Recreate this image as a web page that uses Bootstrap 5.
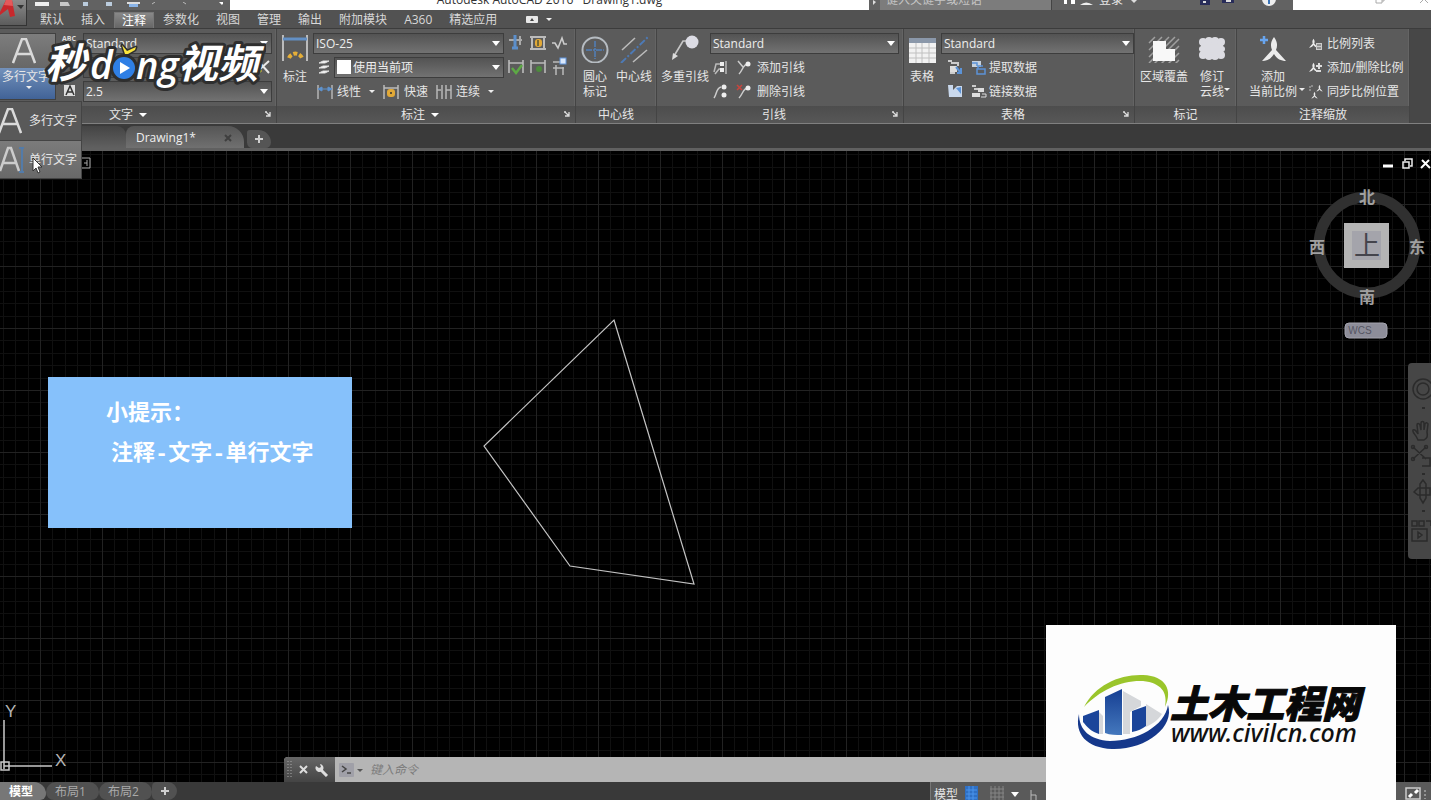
<!DOCTYPE html>
<html lang="zh-CN">
<head>
<meta charset="utf-8">
<meta name="viewport" content="width=device-width, initial-scale=1">
<title>Autodesk AutoCAD 2016 - Drawing1.dwg</title>
<link href="https://cdn.jsdelivr.net/npm/bootstrap@5.3.0/dist/css/bootstrap.min.css" rel="stylesheet">
<style>
  body { font-family: "Open Sans", "Noto Sans CJK SC", sans-serif; font-size: 12px; line-height: 16px; color: #e6e6e6; background: #3a3a3a; }
  button { font: inherit; color: inherit; background: none; border: 0; padding: 0; }
  svg { display: block; flex: none; }
  a { color: inherit; text-decoration: none; }

  .titlebar { height: 10px; background: #626262; }
  .titlebar .clip-end { align-items: flex-end; }
  .quick { width: 230px; padding-left: 35px; gap: 9px; }
  .doc-title { background: #fff; color: #333; font-size: 12px; line-height: 20px; }
  .search-box { width: 172px; background: #7c7c7c; border: 0; border-right: 1px solid #444; color: #c4c4c4; padding: 0 6px; line-height: 20px; height: 20px; }
  .search-box::placeholder { color: #c4c4c4; opacity: 1; }
  .account { width: 241px; gap: 6px; padding-left: 12px; line-height: 20px; }
  .win { width: 138px; background: #fff; gap: 34px; padding-right: 2px; }
  .app-btn { left: 0; top: 0; width: 27px; height: 26px; background: linear-gradient(#8b8b8b, #5c5c5c); border: 1px solid #333; border-width: 0 1px 1px 0; z-index: 3; }

  .menu { height: 18px; background: #525252; padding-left: 32px; gap: 1px; }
  .menu a { padding: 0 8px; height: 18px; color: #d8d8d8; line-height: 20px; }
  .menu a.on { background: linear-gradient(#888, #666); color: #fff; padding: 0 7px; border: 1px solid #777; border-bottom: 0; margin-top: 2px; line-height: 15px; height: 16px; }

  .ribbon { height: 96px; background: #474747; border-top: 1px solid #3c3c3c; border-bottom: 1px solid #808080; }
  .panel { border-right: 1px solid #444; box-shadow: inset -1px 0 #646464; background: #5b5b5b; }
  .panel-body { height: 77px; padding-top: 4px; }
  .panel-name { height: 17px; background: linear-gradient(#4d4d4d, #575757); gap: 6px; }
  .panel-name.more { padding-right: 12px; }
  .panel-name.drop { padding-right: 20px; }
  .launch { right: 5px; top: 5px; }
  .w-text { width: 277px; } .w-dim { width: 299px; } .w-center { width: 81px; } .w-leader { width: 247px; }
  .w-table { width: 231px; } .w-mark { width: 102px; } .w-scale { width: 173px; }
  .tool { line-height: 15px; text-align: center; white-space: nowrap; padding: 0 4px; }
  .tool.snug { padding: 0 1px 0 4px; }
  .tool.edge { padding: 0 2px 0 1px; }
  .tool svg { margin: 0 auto 6px; }
  .rows { gap: 4px; min-width: 0; }
  .line { height: 20px; line-height: 18px; }
  .line button, button.line { padding-top: 2px; }
  .pick { appearance: none; height: 21px; border: 1px solid #3d3d3d; border-radius: 0; color: #eee; padding: 0 2px; line-height: 19px; min-width: 0;
    background: url("data:image/svg+xml,%3Csvg xmlns='http://www.w3.org/2000/svg' width='8' height='5'%3E%3Cpath d='M0 0h8L4 5z' fill='%23fff'/%3E%3C/svg%3E") no-repeat right 3px center, linear-gradient(#535353, #727272); }
  .pick.layer { padding-left: 18px; }
  .pick.find { background: #555; }
  .caret { width: 0; height: 0; border: 4px solid transparent; border-top-color: #fff; border-bottom: 0; }
  .caret-s { width: 0; height: 0; border: 3px solid transparent; border-top-color: #eee; border-bottom: 0; }
  .mtext { width: 56px; height: 67px; border: 1px solid #414141; border-left: 0; }
  .mtext .up { height: 35px; background: linear-gradient(#7d7d7d, #676767); }
  .mtext .down { height: 31px; background: linear-gradient(#7391bb, #416397); line-height: 18px; padding-left: 2px; white-space: nowrap; }
  .swatch { left: 3px; top: 3px; width: 14px; height: 14px; background: #fff; pointer-events: none; }
  .abc-col { width: 23px; }

  .filetabs { height: 27px; background: #3a3a3a; border-bottom: 3px solid #606060; padding-left: 76px; }
  .ftab { height: 22px; background: linear-gradient(#555, #707070); }
  .ftab.past { width: 50px; background: linear-gradient(#444, #606060); border-radius: 0 9px 0 0; }
  .ftab.now { width: 118px; padding: 2px 12px 0 10px; color: #eee; border-radius: 8px 16px 0 0; }
  .ftab.plus { width: 24px; height: 18px; margin-left: 3px; background: #555; border-radius: 3px 14px 6px 6px; }

  .stage { background-color: #000; background-position: 40px 53px;
    background-image:
      linear-gradient(90deg, #222 0 1px, transparent 1px 12px, #101010 12px 13px, transparent 13px 25px, #101010 25px 26px, transparent 26px 37px, #101010 37px 38px, transparent 38px 50px, #101010 50px 51px, transparent 51px),
      linear-gradient(#222 0 1px, transparent 1px 12px, #101010 12px 13px, transparent 13px 25px, #101010 25px 26px, transparent 26px 37px, #101010 37px 38px, transparent 38px 50px, #101010 50px 51px, transparent 51px);
    background-size: 62px 62px; background-blend-mode: lighten; }
  .art { inset: 0; width: 100%; height: 100%; }
  .ucs { left: 0; bottom: 0; }
  .mdi { right: 0; top: 7px; gap: 7px; }
  .cube { right: 4px; top: 32px; }
  .navbar-side { right: 0; top: 212px; width: 23px; height: 196px; background: #464646; border-radius: 4px 0 0 4px; overflow: hidden; }
  .tip { left: 48px; top: 226px; width: 304px; height: 151px; background: #86c1fb; color: #fff; font: 700 22px/40px "Liberation Mono", "Noto Sans CJK SC", monospace; padding: 18px 0 0 58px; white-space: nowrap; }
  .tip p + p { padding-left: 5px; }
  .cmd { left: 284px; right: 60px; bottom: 0; height: 25px; background: #b5b5b5; border-radius: 4px 4px 0 0; overflow: hidden; }
  .cmd-grip { width: 51px; background: linear-gradient(#666, #444); gap: 7px; padding-left: 3px; }
  .cmd input { background: none; border: 0; outline: 0; font-style: italic; color: #555; padding: 0 5px; }
  .cmd input::placeholder { color: #7c7c7c; opacity: 1; }

  .flyout { left: 0; top: 101px; width: 82px; background: #595959; border: 1px solid #444; border-left: 0; z-index: 4; }
  .flyout button { height: 38px; width: 100%; gap: 5px; padding-right: 5px; white-space: nowrap; }
  .flyout .hot { background: linear-gradient(#7b7b7b, #696969); border-top: 1px solid #444; }
  .wm { left: 36px; top: 36px; z-index: 5; pointer-events: none; }
  .pointer { left: 32px; top: 157px; z-index: 6; }

  .status { height: 18px; background: #393939; overflow: hidden; }
  .ltab { height: 18px; background: #515151; color: #aaa; border-radius: 10px 10px 8px 8px; line-height: 20px; }
  .ltab.on { width: 46px; background: #777; color: #fff; font-weight: 700; border-radius: 0 12px 6px 0; padding-right: 4px; }
  .ltab.page { width: 53px; padding-right: 4px; }
  .ltab.plus { width: 25px; border-radius: 6px 12px 12px 6px; }
  .tray { width: 501px; background: #5a5a5a; gap: 7px; padding: 0 4px 0 3px; border-left: 1px solid #777; line-height: 26px; }
  .site { right: 35px; bottom: 0; width: 350px; height: 175px; background: #fdfdfd; z-index: 7; }
</style>
</head>
<body class="vh-100 overflow-hidden d-flex flex-column position-relative">

<svg width="0" height="0" class="position-absolute" aria-hidden="true">
  <defs>
    <symbol id="bigA" viewBox="0 0 24 26"><path d="M1 25 10 1h4l9 24M5 16h14" fill="none" stroke="#dadada" stroke-width="2.500"/></symbol>
    <symbol id="go" viewBox="0 0 6 6"><path d="M0 1h2M1 1l4 4M5 1v4H1" stroke="#ddd" fill="none" stroke-width="1.3"/></symbol>
    <symbol id="plus" viewBox="0 0 8 8"><path d="M4 0v8M0 4h8" stroke="#d0d0d0" stroke-width="2"/></symbol>
    <symbol id="dimline" viewBox="0 0 16 14"><path d="M1 0v14M15 0v14" stroke="#b5b5b5" stroke-width="1.5"/><path d="M1 4h14M1 4l4-2v4zM15 4l-4-2v4z" stroke="#5f93cf" fill="#5f93cf"/></symbol>
    <symbol id="leader" viewBox="0 0 28 26"><path d="M3 21 12 6h7" stroke="#c5c5c5" stroke-width="1.7" fill="none"/><path d="M1 25l1-7 5 3z" fill="#ddd"/><circle cx="21" cy="7" r="6.5" fill="#dcdce4"/></symbol>
    <symbol id="scaleman" viewBox="0 0 24 26"><path d="M12 0c3 4 4 8 2 13l10 11c-5 0-9-2-12-7-3 5-7 7-12 7L10 13C8 8 9 4 12 0z" fill="#ececec"/></symbol>
  </defs>
</svg>

<header class="titlebar d-flex overflow-hidden flex-shrink-0">
  <div class="quick d-flex clip-end flex-shrink-0">
    <svg width="188" height="8" viewBox="0 0 188 8"><path d="M0 0h14v4H0z" fill="#eee"/><path d="M25 0h8l2 4h-10z" fill="#c8c8c8"/><path d="M48 0h5v4h-5zM71 0h6v4h-6z" fill="#bcd"/><path d="M92 0h13v2h-13z" fill="#ddd"/><path d="M94 2h9v3h-9z" fill="#8ab4e8"/><path d="M117 2l3-2M148 0l3 2" stroke="#bbb"/><path d="M184 0h5l-2 3z" fill="#fff"/></svg>
  </div>
  <div class="doc-title flex-grow-1 d-flex clip-end justify-content-center overflow-hidden"><span>Autodesk AutoCAD 2016 &nbsp; Drawing1.dwg</span></div>
  <div class="px-1 d-flex"><svg width="3" height="5"><path d="M0 0l3 2-3 3z" fill="#ddd"/></svg></div>
  <div class="d-flex clip-end"><input class="search-box" aria-label="搜索" placeholder="键入关键字或短语"></div>
  <div class="account d-flex clip-end flex-shrink-0">
    <svg width="29" height="10"><path d="M1 0v4M9 0v4" stroke="#fff" stroke-width="4"/><path d="M16 5q6-5 13 0z" fill="#eee"/></svg>
    <a href="#" class="text-nowrap">登录</a>
    <svg width="164" height="10"><path d="M2 0h6l-3 3z" fill="#ddd"/><path d="M71 0h10v5h-10zM93 0h12v3H93z" fill="#282c59"/><path d="M74 2h3M97 1h5" stroke="#ddd" stroke-width="2"/><circle cx="140" cy="-1" r="7" fill="#eee"/><path d="M140 0v4" stroke="#3973b8" stroke-width="2"/></svg>
  </div>
  <div class="win d-flex justify-content-end flex-shrink-0">
    <svg width="10" height="5"><path d="M1 0v3h6V0M7 1h2V0" stroke="#aaa" fill="none"/></svg>
    <svg width="10" height="5"><path d="M1 3l3-3M9 3 6 0" stroke="#aaa" fill="none"/></svg>
  </div>
</header>
<button class="app-btn position-absolute overflow-hidden" aria-label="应用程序菜单"><svg width="26" height="25"><path d="M0 12 6 0h6l3 16-5 1-2-8-8 6z" fill="#c8282c"/><path d="M6 0h6l1 6-9-1z" fill="#e4595b"/><path d="M17 5h7l-3 4z" fill="#333"/></svg></button>

<nav class="menu d-flex flex-shrink-0" aria-label="功能区">
  <a href="#">默认</a><a href="#">插入</a><a href="#" class="on">注释</a><a href="#">参数化</a><a href="#">视图</a><a href="#">管理</a><a href="#">输出</a><a href="#">附加模块</a><a href="#">A360</a><a href="#">精选应用</a>
  <button class="d-flex align-items-center gap-2 ms-3 ps-1" aria-label="最小化"><svg width="12" height="7"><rect width="12" height="7" rx="1" fill="#e8e8e8"/><path d="M4 5l2-3 2 3z" fill="#444"/></svg><span class="caret-s"></span></button>
</nav>

<section class="ribbon d-flex flex-shrink-0">
  <div class="panel w-text flex-shrink-0">
    <div class="panel-body d-flex">
      <button class="mtext d-flex flex-column align-items-stretch text-start flex-shrink-0">
        <span class="up d-flex align-items-center justify-content-center ps-0 pe-2"><svg width="24" height="26"><use href="#bigA"/></svg></span>
        <span class="down overflow-hidden d-block">多行文字<span class="caret-s d-block mx-auto"></span></span>
      </button>
      <div class="rows d-flex flex-column flex-grow-1 ps-1 pe-1">
        <div class="line d-flex"><svg class="abc-col" height="20"><text x="2" y="8" font-size="7" font-weight="700" fill="#ddd">ABC</text></svg><select class="pick flex-grow-1" aria-label="文字样式"><option>Standard</option></select></div>
        <div class="line d-flex"><span class="abc-col"></span><input class="pick find flex-grow-1" aria-label="查找文字"><svg width="15" height="20" class="ms-n3"><path d="M2 13l10-9M3 6l9 10" stroke="#e8e8e8" stroke-width="2"/><path d="M1 12l3 3" stroke="#e8b33c" stroke-width="3"/></svg></div>
        <div class="line d-flex"><svg class="abc-col" height="20"><rect x="4" y="4" width="11" height="11" fill="#ddd"/><path d="M6 14l4-9 4 9M8 11h5" stroke="#333" fill="none" stroke-width="1.5"/></svg><select class="pick flex-grow-1" aria-label="文字高度"><option>2.5</option></select></div>
      </div>
    </div>
    <div class="panel-name drop d-flex align-items-center justify-content-center position-relative">文字<span class="caret"></span><svg class="launch position-absolute" width="6" height="6"><use href="#go"/></svg></div>
  </div>

  <div class="panel w-dim flex-shrink-0">
    <div class="panel-body d-flex">
      <button class="tool align-self-start"><svg width="28" height="28" class="mb-2"><path d="M2 2v26M26 2v26" stroke="#bbb" stroke-width="2"/><path d="M2 6h24" stroke="#6390c5" stroke-width="3"/><path d="M8 25a7 7 0 0 1 13 0" stroke="#e6af38" stroke-width="4" stroke-dasharray="4 2" fill="none"/></svg>标注</button>
      <div class="rows d-flex flex-column flex-grow-1 pe-2">
        <div class="line d-flex gap-1"><select class="pick flex-grow-1" aria-label="标注样式"><option>ISO-25</option></select>
          <svg width="59" height="20"><path d="M1 7h13M12 3v9" stroke="#aaa" stroke-width="2"/><path d="M7 2v14M4 15h6" stroke="#5c8fcb" stroke-width="3"/><path d="M24 4v13M36 4v13M22 4h16M22 16h16" stroke="#bbb" stroke-width="2"/><rect x="27" y="6" width="7" height="8" rx="3" fill="#e2a937"/><path d="M30 7v6" stroke="#553" stroke-width="1.5"/><path d="M44 10h3l3 5 4-10 2 6h3" stroke="#ccc" stroke-width="1.6" fill="none"/></svg></div>
        <div class="line d-flex gap-1 ps-1"><svg width="13" height="20"><path d="M2 6l4-2h6L8 6zM2 11l4-2h6l-4 2zM2 16l4-2h6l-4 2z" fill="#fff" stroke="#ddd"/></svg>
          <span class="position-relative d-flex flex-grow-1"><select class="pick layer flex-grow-1" aria-label="标注图层"><option>使用当前项</option></select><span class="swatch position-absolute"></span></span>
          <svg width="59" height="20"><path d="M1 3v13M15 3v13M1 6h14M23 3v13M37 3v13M23 6h14" stroke="#bbb" stroke-width="1.6" fill="none"/><path d="M4 11l4 5 6-8" stroke="#5da945" stroke-width="2.5" fill="none"/><circle cx="31" cy="12" r="3" fill="#4c8a3c"/><path d="M45 5h8M45 11h11M48 8v10M55 10v8" stroke="#bbb" stroke-width="1.5"/><rect x="52" y="1" width="6" height="6" fill="#d9e7fa" stroke="#6095dd"/></svg></div>
        <div class="line d-flex align-items-center ps-1"><button class="d-flex align-items-center"><svg width="16" height="14" class="me-1"><use href="#dimline"/></svg>线性</button><span class="caret-s ms-2"></span>
          <button class="d-flex align-items-center ms-2"><svg width="17" height="14" class="me-1"><path d="M1 0v14M15 0v14M1 3h14" stroke="#bbb" stroke-width="1.5"/><rect x="4" y="4" width="8" height="8" rx="3" fill="#e2a937"/><circle cx="8" cy="8" r="1" fill="#333"/></svg>快速</button>
          <button class="d-flex align-items-center ms-2"><svg width="16" height="14" class="me-1"><path d="M1 0v14M6 0v14M10 0v14M15 0v14M1 5h4M10 5h5" stroke="#b8b8b8" stroke-width="1.5"/></svg>连续</button><span class="caret-s ms-2"></span></div>
      </div>
    </div>
    <div class="panel-name more d-flex align-items-center justify-content-center position-relative">标注<span class="caret"></span><svg class="launch position-absolute" width="6" height="6"><use href="#go"/></svg></div>
  </div>

  <div class="panel w-center flex-shrink-0">
    <div class="panel-body d-flex align-items-start ps-1 gap-1">
      <button class="tool edge"><svg width="28" height="30"><circle cx="14" cy="17" r="12.500" fill="none" stroke="#b6bcc2" stroke-width="2"/><path d="M14 8v18M5 17h18" stroke="#5180bb" stroke-width="1.500" stroke-dasharray="6 1 2 1"/></svg>圆心<br>标记</button>
      <button class="tool edge"><svg width="28" height="30"><path d="M2 17 15 5M13 29l14-12" stroke="#bbb" stroke-width="1.600"/><path d="M1 30 28 4" stroke="#4d7ab6" stroke-width="2" stroke-dasharray="7 2 2 2"/></svg>中心线</button>
    </div>
    <div class="panel-name d-flex align-items-center justify-content-center">中心线</div>
  </div>

  <div class="panel w-leader flex-shrink-0">
    <div class="panel-body d-flex">
      <button class="tool snug align-self-start"><svg width="28" height="30"><use href="#leader" y="2" height="26"/></svg>多重引线</button>
      <div class="rows d-flex flex-column flex-grow-1 pe-1">
        <div class="line d-flex"><select class="pick flex-grow-1" aria-label="多重引线样式"><option>Standard</option></select></div>
        <div class="line d-flex align-items-center"><svg width="47" height="16"><path d="M4 13l2-8h4M5 15l4-5h4M16 2v13" stroke="#bbb" stroke-width="1.500" fill="none"/><path d="M10 3h4v4h-4zM10 9h4v4h-4z" fill="#eee"/><path d="M29 15c4-4 4-10 9-10M28 2l5 6" stroke="#ccc" stroke-width="1.500" fill="none"/><circle cx="38" cy="5" r="2.500" fill="#eee"/></svg><button>添加引线</button></div>
        <div class="line d-flex align-items-center"><svg width="47" height="16"><path d="M4 15c3-4 2-10 7-11" stroke="#ccc" stroke-width="1.500" fill="none"/><circle cx="14" cy="4" r="2.500" fill="#eee"/><circle cx="14" cy="12" r="2.500" fill="#eee"/><path d="M29 15c4-4 4-10 9-10" stroke="#ccc" stroke-width="1.500" fill="none"/><path d="M27 2l5 5M32 2l-5 5" stroke="#c8453d" stroke-width="1.500"/><circle cx="38" cy="5" r="2.500" fill="#eee"/></svg><button>删除引线</button></div>
      </div>
    </div>
    <div class="panel-name more d-flex align-items-center justify-content-center position-relative">引线<svg class="launch position-absolute" width="6" height="6"><use href="#go"/></svg></div>
  </div>

  <div class="panel w-table flex-shrink-0">
    <div class="panel-body d-flex">
      <button class="tool snug align-self-start me-1"><svg width="28" height="30"><path d="M1 5h27v25H1z" fill="#f2f2f2"/><path d="M1 5h27v5H1z" fill="#8b98aa"/><path d="M1 15h27M1 20h27M1 25h27M8 10v20M14 10v20M21 10v20" stroke="#c0c0c0"/></svg>表格</button>
      <div class="rows d-flex flex-column flex-grow-1">
        <div class="line d-flex"><select class="pick flex-grow-1" aria-label="表格样式"><option>Standard</option></select></div>
        <div class="line d-flex align-items-center ps-1"><svg width="44" height="16"><path d="M3 2h4M6 4h7v3M5 14h5" stroke="#ccc" stroke-width="2" fill="none"/><path d="M5 7h7v6H5z" fill="#ddd"/><path d="M11 8l5 6M16 9v5h-4" stroke="#5c93d7" stroke-width="2" fill="none"/><path d="M27 2h9v6h-9z" fill="#c6d2df"/><path d="M27 4h5v3M32 10h8v5h-8zM33 10V7h5" stroke="#5c93d7" stroke-width="1.500" fill="none"/></svg><button>提取数据</button></div>
        <div class="line d-flex align-items-center ps-1"><svg width="44" height="16"><path d="M3 2h5v5l4-4h5v11H4z" fill="#c9d8ec"/><path d="M11 5l5 6V4z" fill="#5c93d7"/><path d="M27 3h4M29 6h4" stroke="#ccc" stroke-width="2"/><path d="M33 5h6v4h-6zM27 10h8v4h-8z" fill="#ddd"/><path d="M37 11h4v3h-5" stroke="#ddd" fill="none"/></svg><button>链接数据</button></div>
      </div>
    </div>
    <div class="panel-name more d-flex align-items-center justify-content-center position-relative">表格<svg class="launch position-absolute" width="6" height="6"><use href="#go"/></svg></div>
  </div>

  <div class="panel w-mark flex-shrink-0">
    <div class="panel-body d-flex align-items-start ps-1 gap-1">
      <button class="tool edge"><svg width="32" height="30"><path d="M1 10l6-6M1 17 14 4M1 24 21 4M1 30 27 4M5 32 31 6M12 32l19-19M19 32l12-12M26 32l5-5" stroke="#a0a0a0" stroke-width="1.500"/><path d="M5 8h13v8h9v12H5z" fill="#f8f8f8"/></svg>区域覆盖</button>
      <button class="tool position-relative"><svg width="28" height="30" fill="#dcdce2"><rect x="3" y="8" width="22" height="15"/><circle cx="5" cy="9" r="4"/><circle cx="11" cy="8" r="4"/><circle cx="17" cy="8" r="4"/><circle cx="23" cy="9" r="4"/><circle cx="4" cy="16" r="3"/><circle cx="24" cy="16" r="3"/><circle cx="5" cy="22" r="4"/><circle cx="11" cy="23" r="4"/><circle cx="17" cy="23" r="4"/><circle cx="23" cy="22" r="4"/></svg>修订<br>云线<span class="caret-s position-absolute end-0 bottom-0 mb-2"></span></button>
    </div>
    <div class="panel-name d-flex align-items-center justify-content-center">标记</div>
  </div>

  <div class="panel w-scale flex-shrink-0">
    <div class="panel-body d-flex">
      <button class="tool ps-2 pe-2 ms-1 align-self-start position-relative"><svg width="28" height="30"><use href="#scaleman" x="3" y="4" width="24" height="26"/><path d="M5 3v8M1 7h8" stroke="#68a5ee" stroke-width="2.500"/></svg>添加<br>当前比例<span class="caret-s position-absolute end-0 bottom-0 mb-2"></span></button>
      <div class="rows d-flex flex-column ps-1">
        <button class="line d-flex align-items-center gap-1"><svg width="14" height="14"><use href="#scaleman" width="9" height="13"/><rect x="7" y="6" width="6" height="7" fill="#ccc"/><path d="M8 8h4M8 11h4" stroke="#555"/></svg>比例列表</button>
        <button class="line d-flex align-items-center gap-1 text-nowrap"><svg width="14" height="14"><use href="#scaleman" width="9" height="13"/><path d="M7 5h6M7 10h5M10 2v6" stroke="#ddd" stroke-width="2"/></svg>添加/删除比例</button>
        <button class="line d-flex align-items-center gap-1 text-nowrap"><svg width="14" height="14"><path d="M1 6V1h4" stroke="#bbb" stroke-dasharray="2 1" fill="none"/><use href="#scaleman" x="7" width="7" height="7"/><use href="#scaleman" x="2" y="7" width="7" height="7"/></svg>同步比例位置</button>
      </div>
    </div>
    <div class="panel-name d-flex align-items-center justify-content-center">注释缩放</div>
  </div>
</section>

<div class="flyout position-absolute">
  <button class="d-flex align-items-center"><svg width="24" height="28" viewBox="2 0 24 26"><use href="#bigA" width="24" height="26"/></svg>多行文字</button>
  <button class="hot d-flex align-items-center"><svg width="24" height="28"><path d="M0 25 8 2h3l8 23M3 17h13" fill="none" stroke="#ccc" stroke-width="2.500"/><path d="M22 2v24M19 2h5M19 26h5" stroke="#537ba8" stroke-width="2"/></svg>单行文字</button>
</div>
<svg class="pointer position-absolute" width="12" height="18"><path d="M1 1v13l3-3 2 5 2-1-2-5h4z" fill="#fff" stroke="#333"/></svg>

<svg class="wm position-absolute" width="230" height="60" font-family="Open Sans, Noto Sans CJK SC, sans-serif" font-style="italic" font-weight="700" fill="#fff" stroke="#2e2e2e" stroke-width="6" stroke-linejoin="round" paint-order="stroke">
  <text x="9" y="42" font-size="41">秒</text>
  <text x="54" y="43" font-size="39" font-weight="600">d</text>
  <text x="100" y="43" font-size="38" font-weight="600">ng</text>
  <text x="142" y="42" font-size="40">视频</text>
  <circle cx="88" cy="32" r="11" fill="#2f7fe5"/>
  <path d="M84 26v12l10-6z" stroke="none"/>
  <path d="M86 9l5 6 9-4-1 3-7 4h-3z" fill="#fbe63c" stroke-width="3"/>
</svg>

<div class="filetabs d-flex align-items-end flex-shrink-0">
  <div class="ftab past"></div>
  <div class="ftab now d-flex align-items-center justify-content-between"><a href="#">Drawing1*</a><button aria-label="关闭"><svg width="8" height="8"><path d="M1 1l6 6M7 1 1 7" stroke="#3f3f3f" stroke-width="2"/></svg></button></div>
  <button class="ftab plus d-flex align-items-center justify-content-center" aria-label="新图形"><svg width="8" height="8"><use href="#plus"/></svg></button>
</div>

<main class="stage flex-grow-1 position-relative overflow-hidden">
  <svg class="art position-absolute"><path d="M614 169 694 433 570 415 484 295z" fill="none" stroke="#c4c4c4" stroke-width="1.200"/><path d="M82 7h8v10h-8M87 9v6M84 12h3" fill="none" stroke="#aaa"/></svg>
  <svg class="ucs position-absolute" width="80" height="80"><path d="M4 18v49M4 64h48" stroke="#c8c8c8" stroke-width="1.500"/><path d="M1 60h8v8H1z" fill="none" stroke="#c8c8c8" stroke-width="1.500"/><text x="5" y="15" font-family="Liberation Sans, sans-serif" font-size="17" fill="#b5b5b5">Y</text><text x="55" y="64" font-family="Liberation Sans, sans-serif" font-size="17" fill="#b5b5b5">X</text></svg>
  <div class="mdi position-absolute d-flex">
    <button aria-label="最小化"><svg width="12" height="12"><path d="M1 8h10" stroke="#fff" stroke-width="3"/></svg></button>
    <button aria-label="还原"><svg width="12" height="12"><path d="M2 4h6v6H2zM4 3V1h7v7H9" stroke="#eee" stroke-width="1.500" fill="none"/></svg></button>
    <button aria-label="关闭图形"><svg width="11" height="12"><path d="M2 2l8 8M9 2l-8 8" stroke="#fff" stroke-width="2"/></svg></button>
  </div>
  <svg class="cube position-absolute" width="120" height="160" font-family="Noto Sans CJK SC, sans-serif" font-size="16" fill="#a0a0a0" text-anchor="middle">
    <circle cx="60" cy="62" r="48" fill="none" stroke="#303030" stroke-width="11"/>
    <rect x="37" y="40" width="45" height="45" fill="#b4b4b4"/><rect x="45" y="48" width="29" height="29" fill="#a4a4ab"/>
    <text x="60" y="72" font-size="26" fill="#44444c">上</text>
    <text x="60" y="20" font-weight="700">北</text><text x="60" y="120" font-weight="700">南</text><text x="10" y="70" font-weight="700">西</text><text x="110" y="70" font-weight="700">东</text>
    <rect x="38" y="140" width="42" height="15" rx="4" fill="#8d8d99" stroke="#a3a3ad"/><text x="53" y="151" font-size="10" font-family="Liberation Sans, sans-serif" fill="#555563">WCS</text>
  </svg>
  <div class="navbar-side position-absolute"><svg width="23" height="196" fill="none" stroke="#2b2b2b" stroke-width="1.500"><circle cx="15" cy="26" r="10"/><circle cx="15" cy="26" r="6"/><path d="M14 45h3M14 111h3M14 148h3" stroke-width="2"/><path d="M9 75c-2-4-5-6-4-8 2-1 4 2 5 4l-1-9c0-2 2-2 3 0l1 5v-7c0-2 3-2 3 0v7l1-6c1-2 3-1 3 0l-1 8c1 5 0 6-3 8h-6zM5 84l13 12M18 84 5 96M14 95h8v8h-8"/><circle cx="5" cy="84" r="1.500"/><circle cx="18" cy="84" r="1.500"/><circle cx="5" cy="96" r="1.500"/><path d="M15 117l-3 4v14l3 5 3-5v-14zM6 129l4-4h12v7H10z"/><path d="M4 158h5v5H4zM11 158h5v5h-5zM18 158h5v5M4 166h15v12H4zM10 169l4 3-4 3z"/></svg></div>
  <aside class="tip position-absolute"><p class="m-0">小提示：</p><p class="m-0">注释-文字-单行文字</p></aside>
  <div class="cmd position-absolute d-flex">
    <div class="cmd-grip d-flex align-items-center flex-shrink-0">
      <svg width="5" height="17"><path d="M1 0v17M4 0v17" stroke="#aaa" stroke-dasharray="1 2"/></svg>
      <button aria-label="关闭命令行"><svg width="9" height="9"><path d="M1 1l7 7M8 1 1 8" stroke="#ddd" stroke-width="2"/></svg></button>
      <button aria-label="自定义"><svg width="14" height="14"><path d="M5 6l7 7" stroke="#ddd" stroke-width="3"/><path d="M1 3a4 4 0 1 0 4-2l1 3-2 1z" fill="#ddd"/></svg></button>
    </div>
    <label class="d-flex align-items-center flex-grow-1 ps-1"><svg width="26" height="16"><rect y="1" width="15" height="14" rx="1" fill="#a0a0a8"/><path d="M3 4l4 3-4 3M8 11h4" stroke="#444" fill="none" stroke-width="1.500"/><path d="M18 7h6l-3 3z" fill="#555"/></svg><input class="flex-grow-1" aria-label="命令" placeholder="键入命令"></label>
  </div>
</main>

<footer class="status d-flex flex-shrink-0">
  <button class="ltab on">模型</button><button class="ltab page">布局1</button><button class="ltab page">布局2</button>
  <button class="ltab plus d-flex align-items-center justify-content-center" aria-label="新布局"><svg width="8" height="8"><use href="#plus"/></svg></button>
  <div class="tray d-flex align-items-start ms-auto">
    <button class="text-nowrap">模型</button>
    <svg width="14" height="16" class="mt-1"><path d="M0 0h13v16H0z" fill="#2f70c4"/><path d="M1 4h11M1 8h11M1 12h11M4 0v16M8 0v16" stroke="#4b94ed"/></svg>
    <svg width="14" height="16" class="ms-1 mt-1"><path d="M1 0v16M5 0v16M9 0v16M13 0v16M0 3h14M0 7h14M0 11h14" stroke="#858585"/></svg>
    <svg width="8" height="16"><path d="M0 10h8l-4 5z" fill="#fff"/></svg>
    <svg width="16" height="16" class="mt-1"><path d="M5 4v12M5 9h5v7" stroke="#bbb" fill="none"/></svg>
    <svg width="22" height="16" class="ms-auto mt-1"><rect x="1" y="2" width="14" height="11" fill="none" stroke="#ccc" stroke-width="1.500"/><path d="M4 11l3-3M10 7l3-3" stroke="#fff" stroke-width="3"/><path d="M20 4v9" stroke="#ccc" stroke-dasharray="2 2"/></svg>
  </div>
</footer>

<a href="#" class="site position-absolute" aria-label="土木工程网"><svg width="350" height="175">
  <defs><linearGradient id="bl" x1="0" y1="0" x2="0" y2="1"><stop offset="0" stop-color="#163f93"/><stop offset="1" stop-color="#4478bd"/></linearGradient></defs>
  <path d="M38 82C49 60 74 49 97 50c23 1 30 15 22 32 3-15-4-24-22-26-21-1-43 9-59 26z" fill="#9ac52b"/>
  <path d="M37 91 53 85v24c-7-2-12-7-16-12z" fill="#1b459a"/><path d="M59 72l17-8v46c-6 0-12 0-17-2z" fill="url(#bl)"/><path d="M86 86l14-5v20c-4 3-8 5-14 6z" fill="#1b459a"/>
  <path d="M53 87l4 4v18h-4zM77 66l18 10v5l-11 6v22h-7zM100 79l16 10c-3 5-8 9-16 13z" fill="#d5d7da"/>
  <path d="M33 89c0 16 11 26 31 27 27 0 55-15 58-36 7 22-22 45-56 44-25-1-38-15-33-35z" fill="#15388b"/>
  <text x="124" y="93" font-family="Noto Sans CJK SC, sans-serif" font-size="38" font-weight="900" font-style="italic" fill="#080808" stroke="#080808" stroke-width="1">土木工程网</text>
  <text x="125" y="117" font-family="Noto Sans, sans-serif" font-size="25" font-weight="500" font-style="italic" fill="#111">www.civilcn.com</text>
</svg></a>

<script src="https://cdn.jsdelivr.net/npm/bootstrap@5.3.0/dist/js/bootstrap.bundle.min.js"></script>
</body>
</html>
